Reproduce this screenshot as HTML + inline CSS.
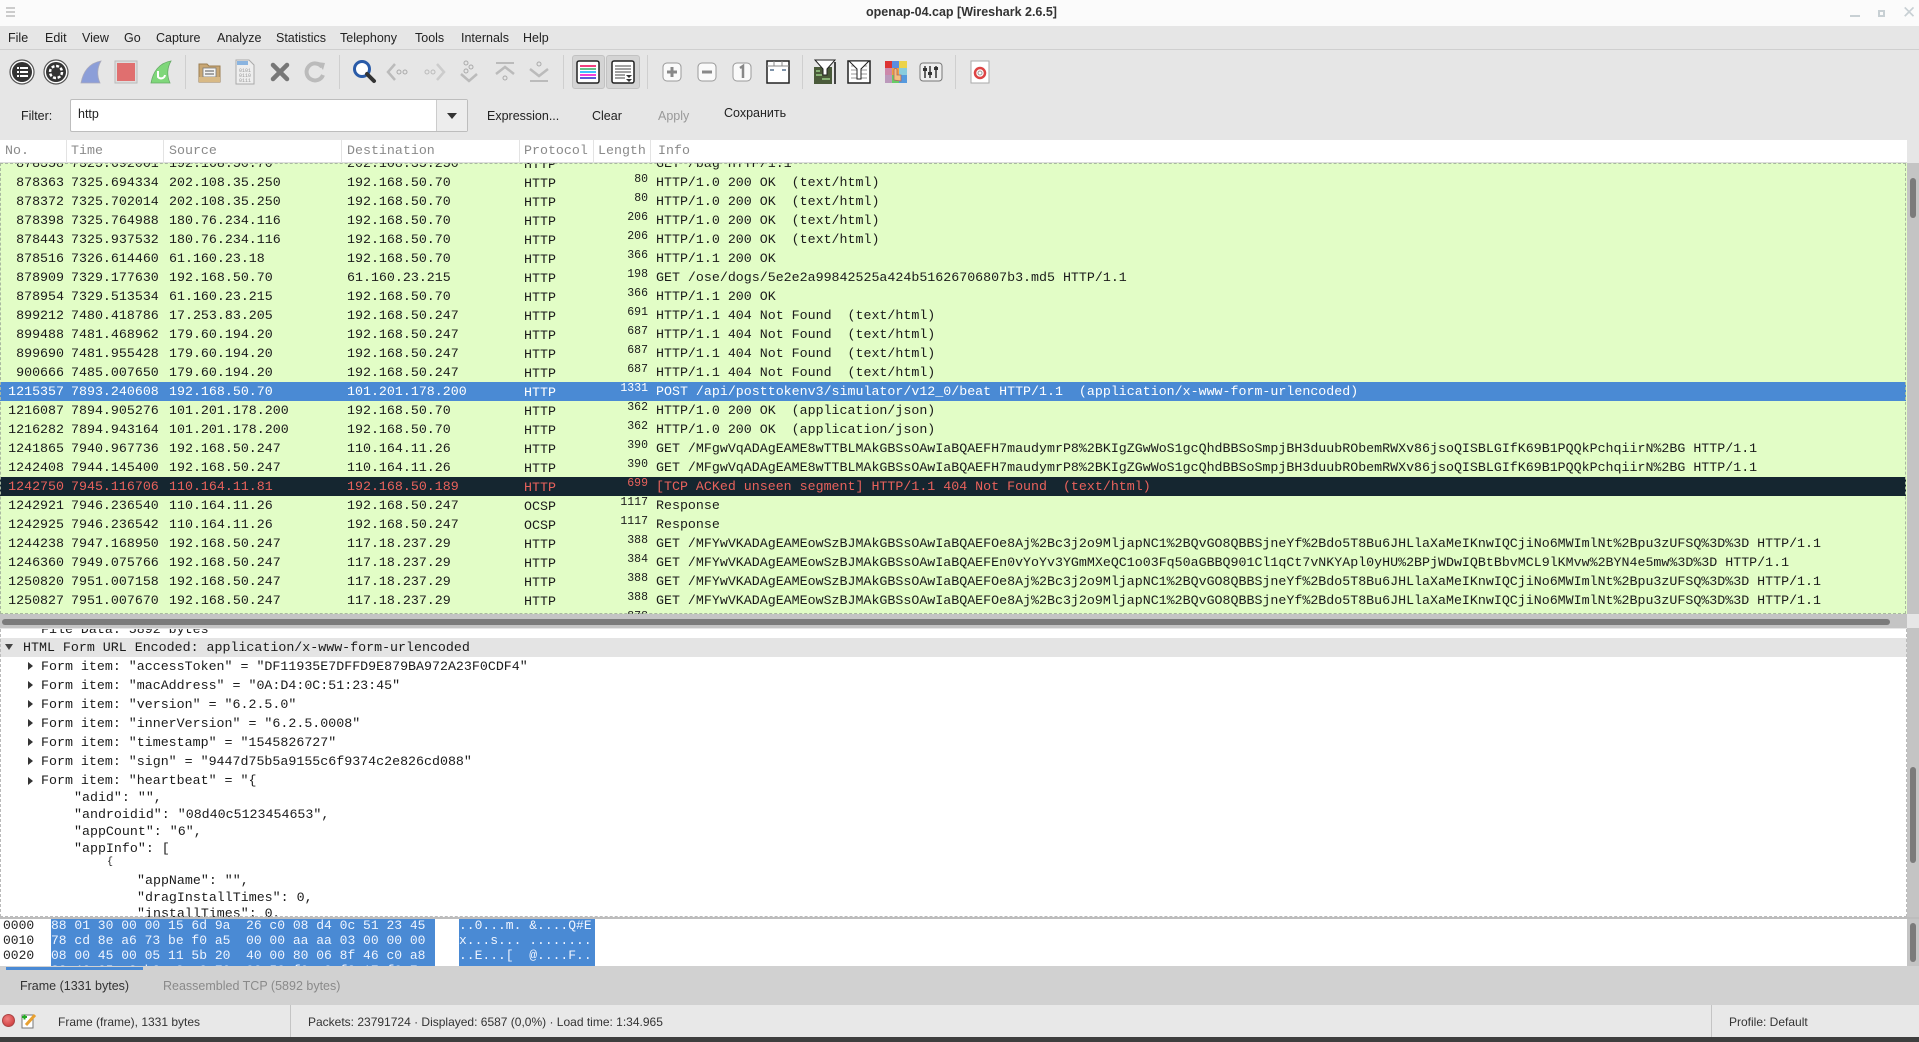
<!DOCTYPE html>
<html><head><meta charset="utf-8">
<style>
*{margin:0;padding:0;box-sizing:border-box}
body{width:1919px;height:1042px;overflow:hidden;background:#e6e6e6;font-family:"Liberation Sans",sans-serif;font-size:12px;color:#222;position:relative}
.a{position:absolute}
.title{left:0;top:0;width:1919px;height:26px;background:#fbfbfb}
.menu{left:0;top:26px;width:1919px;height:24px;background:#e6e6e6;border-bottom:1px solid #cfcfcf}
.menu span{position:absolute;top:5px;font-size:12.5px;color:#222}
.ic{position:absolute;top:58px;width:28px;height:28px}
.sep{position:absolute;top:55px;width:1px;height:34px;background:#cfcfcf}
.mono{font-family:"Liberation Mono",monospace}
#list{left:0;top:140px;width:1907px;height:474px;overflow:hidden;background:#e2fdc6;font-family:"Liberation Mono",monospace;font-size:13.3px;color:#1a1a1a}
.hdr{position:absolute;left:0;top:0;width:1907px;height:23px;background:#fff;border-bottom:1px solid #ddd;z-index:2;color:#8a8a8a;font-size:13.3px}
.hdr span{position:absolute;top:3px}
.hdr i{position:absolute;top:0;width:1px;height:23px;background:#e3e3e3}
.r{position:absolute;left:0;width:1906px;height:19px;line-height:19px;white-space:pre}
.r span{position:absolute;top:0}
.n{left:0;width:64px;text-align:right}
.t{left:71px}.s{left:169px}.d{left:347px}.p{left:524px;top:1px!important}
.l{left:593px;width:55px;text-align:right;font-size:11.5px;top:-3px!important}
.i{left:656px}
.sel{background:#4a8ad4;color:#fff}
.blk{background:#152630;color:#e8625c}
#det{left:0;top:629px;width:1907px;height:288px;background:#fff;overflow:hidden;font-family:"Liberation Mono",monospace;font-size:13.3px;color:#1a1a1a}
.dl{position:absolute;white-space:pre;line-height:19px;height:19px}
.tri{position:absolute;width:0;height:0;border-top:4px solid transparent;border-bottom:4px solid transparent;border-left:5px solid #333}
#bytes{left:0;top:919px;width:1907px;height:47px;background:#fff;overflow:hidden;font-family:"Liberation Mono",monospace;font-size:13px;color:#222}
.bl{position:absolute;white-space:pre;line-height:15px;height:15px}
.hl{background:#4a8ad4;color:#eef4ff}
.vs{position:absolute;background:#c4c4c4;width:12px}
.th{position:absolute;background:#7b7b7b;border-radius:3px;width:6px;left:3px}
</style></head><body>

<div class="a title"></div>
<div class="a" style="left:6px;top:7px;width:9px;height:2px;background:#ccc;box-shadow:0 4px 0 #ccc,0 8px 0 #ccc"></div>
<div class="a" style="left:0;width:1919px;top:5px;text-align:center;font-weight:bold;font-size:12.5px;color:#333;padding-left:4px">openap-04.cap [Wireshark 2.6.5]</div>
<div class="a" style="left:1850px;top:15px;width:10px;height:2px;background:#c8d0d4"></div>
<div class="a" style="left:1878px;top:10px;width:7px;height:7px;border:2px solid #c8d0d4"></div>
<div class="a" style="left:1876px;top:6px;width:7px;height:7px;border:2px solid #c8d0d4;border-left:none;border-bottom:none;display:none"></div>
<div class="a" style="left:1902px;top:3px;font-size:17px;color:#c8d0d4">✕</div>

<div class="a menu">
<span style="left:8px">File</span><span style="left:45px">Edit</span><span style="left:82px">View</span><span style="left:124px">Go</span><span style="left:156px">Capture</span><span style="left:217px">Analyze</span><span style="left:276px">Statistics</span><span style="left:340px">Telephony</span><span style="left:415px">Tools</span><span style="left:461px">Internals</span><span style="left:523px">Help</span>
</div>

<!-- toolbar -->
<svg class="ic" style="left:8px" viewBox="0 0 28 28"><circle cx="14" cy="14" r="12" fill="#fff" stroke="#555" stroke-width="1.2"/><circle cx="14" cy="14" r="10" fill="#333"/><g fill="#fff"><rect x="9" y="9" width="2" height="2"/><rect x="12" y="9" width="8" height="2"/><rect x="9" y="13" width="2" height="2"/><rect x="12" y="13" width="8" height="2"/><rect x="9" y="17" width="2" height="2"/><rect x="12" y="17" width="8" height="2"/></g></svg>
<svg class="ic" style="left:42px" viewBox="0 0 28 28"><circle cx="14" cy="14" r="12" fill="#fff" stroke="#555" stroke-width="1.2"/><circle cx="14" cy="14" r="10" fill="#333"/><circle cx="14" cy="14" r="6" fill="none" stroke="#fff" stroke-width="2.5" stroke-dasharray="3 1.7"/><circle cx="14" cy="14" r="2.5" fill="#333"/></svg>
<svg class="ic" style="left:77px" viewBox="0 0 28 28"><path d="M4 25 C6 14 12 5 24 3 C20 10 20 18 23 25 Z" fill="#8c9ed8" stroke="#aab" stroke-width=".8"/></svg>
<svg class="ic" style="left:112px" viewBox="0 0 28 28"><rect x="3" y="3" width="22" height="22" fill="#ddd" stroke="#bbb"/><rect x="5" y="5" width="18" height="18" fill="#e06f6f"/></svg>
<svg class="ic" style="left:147px" viewBox="0 0 28 28"><path d="M4 25 C6 14 12 5 24 3 C20 10 20 18 23 25 Z" fill="#7fd77a" stroke="#6a6" stroke-width=".8"/><path d="M11 13 v6 a4 4 0 0 0 7 -2" fill="none" stroke="#fff" stroke-width="2"/></svg>
<div class="sep" style="left:185px"></div>
<svg class="ic" style="left:196px" viewBox="0 0 28 28"><path d="M3 6 h8 l2 2 h11 v16 H3 Z" fill="#c9a774" stroke="#9c7f52"/><rect x="7" y="10" width="13" height="9" fill="#f4f4f4" stroke="#777" stroke-width=".8"/><path d="M9 13h9M9 16h9" stroke="#555"/><rect x="3" y="19" width="21" height="5" fill="#d8b985"/></svg>
<svg class="ic" style="left:231px" viewBox="0 0 28 28"><path d="M5 2 h13 l5 5 v19 H5 Z" fill="#eee" stroke="#aaa"/><path d="M6 3h11v4H6z" fill="#8ab4e0"/><text x="8" y="14" font-size="5" fill="#999" font-family="Liberation Mono">0101</text><text x="8" y="19" font-size="5" fill="#999" font-family="Liberation Mono">0110</text><text x="8" y="24" font-size="5" fill="#999" font-family="Liberation Mono">0111</text></svg>
<svg class="ic" style="left:266px" viewBox="0 0 28 28"><path d="M7 7 L21 21 M21 7 L7 21" stroke="#777" stroke-width="4.5" stroke-linecap="round"/></svg>
<svg class="ic" style="left:301px" viewBox="0 0 28 28"><path d="M21 9 A8.5 8.5 0 1 0 22 17" fill="none" stroke="#bbb" stroke-width="4"/><path d="M16 4 L24 5 L22 12 Z" fill="#bbb"/></svg>
<div class="sep" style="left:339px"></div>
<svg class="ic" style="left:350px" viewBox="0 0 28 28"><circle cx="12" cy="11" r="7.5" fill="#fff" stroke="#2a5ba8" stroke-width="3"/><path d="M17 16 L24 23" stroke="#333" stroke-width="4" stroke-linecap="round"/></svg>
<svg class="ic" style="left:384px" viewBox="0 0 28 28"><path d="M11 6 L4 14 L11 22" fill="none" stroke="#bbb" stroke-width="2.5"/><circle cx="15" cy="14" r="2" fill="none" stroke="#aaa"/><circle cx="21" cy="14" r="2" fill="none" stroke="#aaa"/></svg>
<svg class="ic" style="left:420px" viewBox="0 0 28 28"><path d="M17 6 L24 14 L17 22" fill="none" stroke="#ccc" stroke-width="2.5"/><circle cx="7" cy="14" r="2" fill="none" stroke="#bbb"/><circle cx="13" cy="14" r="2" fill="none" stroke="#bbb"/></svg>
<svg class="ic" style="left:455px" viewBox="0 0 28 28"><circle cx="11" cy="5" r="2" fill="none" stroke="#aaa"/><circle cx="16" cy="9" r="2" fill="none" stroke="#aaa"/><circle cx="11" cy="13" r="2" fill="none" stroke="#aaa"/><path d="M6 16 L14 23 L22 16" fill="none" stroke="#bbb" stroke-width="2.5"/></svg>
<svg class="ic" style="left:491px" viewBox="0 0 28 28"><path d="M5 5h18" stroke="#bbb" stroke-width="2"/><path d="M5 16 L14 9 L23 16" fill="none" stroke="#bbb" stroke-width="2.5"/><circle cx="14" cy="20" r="2" fill="none" stroke="#aaa"/></svg>
<svg class="ic" style="left:525px" viewBox="0 0 28 28"><circle cx="14" cy="6" r="2" fill="none" stroke="#aaa"/><path d="M5 11 L14 18 L23 11" fill="none" stroke="#bbb" stroke-width="2.5"/><path d="M5 23h18" stroke="#bbb" stroke-width="2"/></svg>
<div class="sep" style="left:563px"></div>
<div class="a" style="left:572px;top:55px;width:33px;height:34px;background:#d4d4d4;border:1px solid #c2c2c2;border-radius:3px"></div>
<div class="a" style="left:606px;top:55px;width:34px;height:34px;background:#d4d4d4;border:1px solid #c2c2c2;border-radius:3px"></div>
<svg class="ic" style="left:574px" viewBox="0 0 28 28"><rect x="3" y="3" width="22" height="22" rx="2" fill="#fff" stroke="#222" stroke-width="1.5"/><path d="M6 8h16" stroke="#e05" stroke-width="1.5"/><path d="M6 11h16" stroke="#3a6" stroke-width="1.5"/><path d="M6 14h16" stroke="#0af" stroke-width="1.5"/><path d="M6 17h16" stroke="#e0c" stroke-width="1.5"/><path d="M6 20h16" stroke="#22c" stroke-width="1.5"/></svg>
<svg class="ic" style="left:609px" viewBox="0 0 28 28"><rect x="3" y="3" width="22" height="22" rx="2" fill="#fff" stroke="#222" stroke-width="1.5"/><path d="M6 8h16M6 11h16M6 14h16M6 17h10M6 20h10" stroke="#444"/><path d="M17 17h6l-3 3z M17 21h6l-3 3z" fill="#333"/></svg>
<div class="sep" style="left:647px"></div>
<svg class="ic" style="left:658px" viewBox="0 0 28 28"><rect x="5" y="5" width="18" height="18" rx="4" fill="#fafafa" stroke="#999"/><path d="M14 9v10M9 14h10" stroke="#888" stroke-width="3"/></svg>
<svg class="ic" style="left:693px" viewBox="0 0 28 28"><rect x="5" y="5" width="18" height="18" rx="4" fill="#fafafa" stroke="#999"/><path d="M9 14h10" stroke="#888" stroke-width="3"/></svg>
<svg class="ic" style="left:728px" viewBox="0 0 28 28"><rect x="5" y="5" width="18" height="18" rx="4" fill="#fafafa" stroke="#999"/><path d="M12 10l3-2v12" fill="none" stroke="#888" stroke-width="2.5"/></svg>
<svg class="ic" style="left:764px" viewBox="0 0 28 28"><rect x="3" y="3" width="22" height="22" fill="#fff" stroke="#222" stroke-width="1.5"/><path d="M3 8h22M10 3v5M18 3v5" stroke="#888"/><path d="M6 12h4M18 12h4" stroke="#357" stroke-width="1.2"/></svg>
<div class="sep" style="left:802px"></div>
<svg class="ic" style="left:811px" viewBox="0 0 28 28"><rect x="3" y="9" width="18" height="17" fill="#4a5a3a"/><path d="M5 13h4M5 17h6M11 21h8" stroke="#9c8" stroke-width="1.5"/><path d="M24 4v22" stroke="#444" stroke-width="2"/><path d="M4 2h20l-8 9v6h-4v-6z" fill="#fff" stroke="#222"/></svg>
<svg class="ic" style="left:845px" viewBox="0 0 28 28"><rect x="3" y="3" width="22" height="22" fill="#fff" stroke="#222" stroke-width="1.5"/><path d="M6 8h16M6 12h16M6 16h16M6 20h16" stroke="#999"/><path d="M4 3h20l-8 8v10h-4V11z" fill="#fff" stroke="#222"/></svg>
<svg class="ic" style="left:882px" viewBox="0 0 28 28"><rect x="3" y="3" width="7" height="7" fill="#d33"/><rect x="10" y="3" width="7" height="7" fill="#5a8de0"/><rect x="17" y="3" width="8" height="7" fill="#ecd34a"/><rect x="3" y="10" width="7" height="7" fill="#c8a"/><rect x="10" y="10" width="7" height="7" fill="#f0a040"/><rect x="17" y="10" width="8" height="7" fill="#8cd"/><rect x="3" y="17" width="7" height="8" fill="#b9b"/><rect x="10" y="17" width="7" height="8" fill="#6c6"/><rect x="17" y="17" width="8" height="8" fill="#59d"/><path d="M12 22v-10a1.5 1.5 0 0 1 3 0v5h4v6z" fill="#f2c080" stroke="#a66" stroke-width=".8"/></svg>
<svg class="ic" style="left:917px" viewBox="0 0 28 28"><rect x="3" y="5" width="22" height="18" rx="3" fill="#eee" stroke="#777"/><path d="M8 8v12M13 8v12M19 8v12" stroke="#333" stroke-width="1.5"/><rect x="6" y="10" width="4" height="3" fill="#333"/><rect x="11" y="14" width="4" height="3" fill="#333"/><rect x="17" y="9" width="4" height="3" fill="#333"/></svg>
<div class="sep" style="left:955px"></div>
<svg class="ic" style="left:966px" viewBox="0 0 28 28"><path d="M5 3h18v22H5z" fill="#fff" stroke="#aaa"/><circle cx="14" cy="15" r="5" fill="none" stroke="#d44" stroke-width="2.5"/><circle cx="14" cy="15" r="2" fill="#fff" stroke="#999"/></svg>

<!-- filter bar -->
<div class="a" style="left:21px;top:109px;font-size:12.5px">Filter:</div>
<div class="a" style="left:70px;top:99px;width:398px;height:33px;background:#fff;border:1px solid #bdbdbd;border-radius:2px"></div>
<div class="a" style="left:436px;top:100px;width:31px;height:31px;background:#ededed;border-left:1px solid #ccc"></div>
<div class="a" style="left:447px;top:113px;width:0;height:0;border-left:5px solid transparent;border-right:5px solid transparent;border-top:6px solid #333"></div>
<div class="a" style="left:78px;top:107px;font-size:12.5px">http</div>
<div class="a" style="left:487px;top:109px;font-size:12.5px">Expression...</div>
<div class="a" style="left:592px;top:109px;font-size:12.5px">Clear</div>
<div class="a" style="left:658px;top:109px;font-size:12.5px;color:#999">Apply</div>
<div class="a" style="left:724px;top:106px;font-size:12.5px">Сохранить</div>

<!-- packet list -->
<div class="a" id="list">
<div class="hdr">
<span style="left:5px">No.</span><span style="left:71px">Time</span><span style="left:169px">Source</span><span style="left:347px">Destination</span><span style="left:524px">Protocol</span><span style="left:598px">Length</span><span style="left:658px">Info</span>
<i style="left:66px"></i><i style="left:163px"></i><i style="left:341px"></i><i style="left:519px"></i><i style="left:593px"></i><i style="left:650px"></i>
</div>
<div class="a" style="left:0;top:23px;width:1906px;height:451px;border:1px dashed #a9b9a0;border-right:1px dashed #a9b9a0;z-index:1"></div>
<div class="r" style="top:14px"><span class="n">878358</span><span class="t">7325.692001</span><span class="s">192.168.50.70</span><span class="d">202.108.35.250</span><span class="p">HTTP</span><span class="l">283</span><span class="i">GET /bag HTTP/1.1</span></div>
<div class="r" style="top:33px"><span class="n">878363</span><span class="t">7325.694334</span><span class="s">202.108.35.250</span><span class="d">192.168.50.70</span><span class="p">HTTP</span><span class="l">80</span><span class="i">HTTP/1.0 200 OK  (text/html)</span></div>
<div class="r" style="top:52px"><span class="n">878372</span><span class="t">7325.702014</span><span class="s">202.108.35.250</span><span class="d">192.168.50.70</span><span class="p">HTTP</span><span class="l">80</span><span class="i">HTTP/1.0 200 OK  (text/html)</span></div>
<div class="r" style="top:71px"><span class="n">878398</span><span class="t">7325.764988</span><span class="s">180.76.234.116</span><span class="d">192.168.50.70</span><span class="p">HTTP</span><span class="l">206</span><span class="i">HTTP/1.0 200 OK  (text/html)</span></div>
<div class="r" style="top:90px"><span class="n">878443</span><span class="t">7325.937532</span><span class="s">180.76.234.116</span><span class="d">192.168.50.70</span><span class="p">HTTP</span><span class="l">206</span><span class="i">HTTP/1.0 200 OK  (text/html)</span></div>
<div class="r" style="top:109px"><span class="n">878516</span><span class="t">7326.614460</span><span class="s">61.160.23.18</span><span class="d">192.168.50.70</span><span class="p">HTTP</span><span class="l">366</span><span class="i">HTTP/1.1 200 OK</span></div>
<div class="r" style="top:128px"><span class="n">878909</span><span class="t">7329.177630</span><span class="s">192.168.50.70</span><span class="d">61.160.23.215</span><span class="p">HTTP</span><span class="l">198</span><span class="i">GET /ose/dogs/5e2e2a99842525a424b51626706807b3.md5 HTTP/1.1</span></div>
<div class="r" style="top:147px"><span class="n">878954</span><span class="t">7329.513534</span><span class="s">61.160.23.215</span><span class="d">192.168.50.70</span><span class="p">HTTP</span><span class="l">366</span><span class="i">HTTP/1.1 200 OK</span></div>
<div class="r" style="top:166px"><span class="n">899212</span><span class="t">7480.418786</span><span class="s">17.253.83.205</span><span class="d">192.168.50.247</span><span class="p">HTTP</span><span class="l">691</span><span class="i">HTTP/1.1 404 Not Found  (text/html)</span></div>
<div class="r" style="top:185px"><span class="n">899488</span><span class="t">7481.468962</span><span class="s">179.60.194.20</span><span class="d">192.168.50.247</span><span class="p">HTTP</span><span class="l">687</span><span class="i">HTTP/1.1 404 Not Found  (text/html)</span></div>
<div class="r" style="top:204px"><span class="n">899690</span><span class="t">7481.955428</span><span class="s">179.60.194.20</span><span class="d">192.168.50.247</span><span class="p">HTTP</span><span class="l">687</span><span class="i">HTTP/1.1 404 Not Found  (text/html)</span></div>
<div class="r" style="top:223px"><span class="n">900666</span><span class="t">7485.007650</span><span class="s">179.60.194.20</span><span class="d">192.168.50.247</span><span class="p">HTTP</span><span class="l">687</span><span class="i">HTTP/1.1 404 Not Found  (text/html)</span></div>
<div class="r sel" style="top:242px"><span class="n">1215357</span><span class="t">7893.240608</span><span class="s">192.168.50.70</span><span class="d">101.201.178.200</span><span class="p">HTTP</span><span class="l">1331</span><span class="i">POST /api/posttokenv3/simulator/v12_0/beat HTTP/1.1  (application/x-www-form-urlencoded)</span></div>
<div class="r" style="top:261px"><span class="n">1216087</span><span class="t">7894.905276</span><span class="s">101.201.178.200</span><span class="d">192.168.50.70</span><span class="p">HTTP</span><span class="l">362</span><span class="i">HTTP/1.0 200 OK  (application/json)</span></div>
<div class="r" style="top:280px"><span class="n">1216282</span><span class="t">7894.943164</span><span class="s">101.201.178.200</span><span class="d">192.168.50.70</span><span class="p">HTTP</span><span class="l">362</span><span class="i">HTTP/1.0 200 OK  (application/json)</span></div>
<div class="r" style="top:299px"><span class="n">1241865</span><span class="t">7940.967736</span><span class="s">192.168.50.247</span><span class="d">110.164.11.26</span><span class="p">HTTP</span><span class="l">390</span><span class="i">GET /MFgwVqADAgEAME8wTTBLMAkGBSsOAwIaBQAEFH7maudymrP8%2BKIgZGwWoS1gcQhdBBSoSmpjBH3duubRObemRWXv86jsoQISBLGIfK69B1PQQkPchqiirN%2BG HTTP/1.1</span></div>
<div class="r" style="top:318px"><span class="n">1242408</span><span class="t">7944.145400</span><span class="s">192.168.50.247</span><span class="d">110.164.11.26</span><span class="p">HTTP</span><span class="l">390</span><span class="i">GET /MFgwVqADAgEAME8wTTBLMAkGBSsOAwIaBQAEFH7maudymrP8%2BKIgZGwWoS1gcQhdBBSoSmpjBH3duubRObemRWXv86jsoQISBLGIfK69B1PQQkPchqiirN%2BG HTTP/1.1</span></div>
<div class="r blk" style="top:337px"><span class="n">1242750</span><span class="t">7945.116706</span><span class="s">110.164.11.81</span><span class="d">192.168.50.189</span><span class="p">HTTP</span><span class="l">699</span><span class="i">[TCP ACKed unseen segment] HTTP/1.1 404 Not Found  (text/html)</span></div>
<div class="r" style="top:356px"><span class="n">1242921</span><span class="t">7946.236540</span><span class="s">110.164.11.26</span><span class="d">192.168.50.247</span><span class="p">OCSP</span><span class="l">1117</span><span class="i">Response</span></div>
<div class="r" style="top:375px"><span class="n">1242925</span><span class="t">7946.236542</span><span class="s">110.164.11.26</span><span class="d">192.168.50.247</span><span class="p">OCSP</span><span class="l">1117</span><span class="i">Response</span></div>
<div class="r" style="top:394px"><span class="n">1244238</span><span class="t">7947.168950</span><span class="s">192.168.50.247</span><span class="d">117.18.237.29</span><span class="p">HTTP</span><span class="l">388</span><span class="i">GET /MFYwVKADAgEAMEowSzBJMAkGBSsOAwIaBQAEFOe8Aj%2Bc3j2o9MljapNC1%2BQvGO8QBBSjneYf%2Bdo5T8Bu6JHLlaXaMeIKnwIQCjiNo6MWImlNt%2Bpu3zUFSQ%3D%3D HTTP/1.1</span></div>
<div class="r" style="top:413px"><span class="n">1246360</span><span class="t">7949.075766</span><span class="s">192.168.50.247</span><span class="d">117.18.237.29</span><span class="p">HTTP</span><span class="l">384</span><span class="i">GET /MFYwVKADAgEAMEowSzBJMAkGBSsOAwIaBQAEFEn0vYoYv3YGmMXeQC1o03Fq50aGBBQ901Cl1qCt7vNKYApl0yHU%2BPjWDwIQBtBbvMCL9lKMvw%2BYN4e5mw%3D%3D HTTP/1.1</span></div>
<div class="r" style="top:432px"><span class="n">1250820</span><span class="t">7951.007158</span><span class="s">192.168.50.247</span><span class="d">117.18.237.29</span><span class="p">HTTP</span><span class="l">388</span><span class="i">GET /MFYwVKADAgEAMEowSzBJMAkGBSsOAwIaBQAEFOe8Aj%2Bc3j2o9MljapNC1%2BQvGO8QBBSjneYf%2Bdo5T8Bu6JHLlaXaMeIKnwIQCjiNo6MWImlNt%2Bpu3zUFSQ%3D%3D HTTP/1.1</span></div>
<div class="r" style="top:451px"><span class="n">1250827</span><span class="t">7951.007670</span><span class="s">192.168.50.247</span><span class="d">117.18.237.29</span><span class="p">HTTP</span><span class="l">388</span><span class="i">GET /MFYwVKADAgEAMEowSzBJMAkGBSsOAwIaBQAEFOe8Aj%2Bc3j2o9MljapNC1%2BQvGO8QBBSjneYf%2Bdo5T8Bu6JHLlaXaMeIKnwIQCjiNo6MWImlNt%2Bpu3zUFSQ%3D%3D HTTP/1.1</span></div>
<div class="r" style="top:470px"><span class="n">1255500</span><span class="t">7953.966748</span><span class="s">117.18.237.29</span><span class="d">192.168.50.247</span><span class="p">OCSP</span><span class="l">878</span><span class="i">Response</span></div>
</div>
<div class="vs" style="left:1907px;top:163px;height:451px"></div>
<div class="th" style="left:1910px;top:178px;height:40px"></div>
<div class="a" style="left:1907px;top:140px;width:12px;height:23px;background:#e6e6e6"></div>
<!-- hscroll -->
<div class="a" style="left:0;top:614px;width:1907px;height:14px;background:#c4c4c4"></div>
<div class="a" style="left:2px;top:619px;width:1888px;height:6px;background:#7b7b7b;border-radius:3px"></div>
<div class="a" style="left:1907px;top:614px;width:12px;height:14px;background:#e6e6e6"></div>

<!-- details -->
<div class="a" id="det">
<div class="dl" style="left:41px;top:-9px">File Data: 5892 bytes</div>
<div class="a" style="left:0;top:9px;width:1907px;height:19px;background:#e4e4e4"></div>
<div class="a" style="left:5px;top:15px;width:0;height:0;border-left:4px solid transparent;border-right:4px solid transparent;border-top:6px solid #444"></div>
<div class="dl" style="left:23px;top:9px">HTML Form URL Encoded: application/x-www-form-urlencoded</div>
<div class="tri" style="left:28px;top:33px"></div><div class="dl" style="left:41px;top:28px">Form item: "accessToken" = "DF11935E7DFFD9E879BA972A23F0CDF4"</div>
<div class="tri" style="left:28px;top:52px"></div><div class="dl" style="left:41px;top:47px">Form item: "macAddress" = "0A:D4:0C:51:23:45"</div>
<div class="tri" style="left:28px;top:71px"></div><div class="dl" style="left:41px;top:66px">Form item: "version" = "6.2.5.0"</div>
<div class="tri" style="left:28px;top:90px"></div><div class="dl" style="left:41px;top:85px">Form item: "innerVersion" = "6.2.5.0008"</div>
<div class="tri" style="left:28px;top:109px"></div><div class="dl" style="left:41px;top:104px">Form item: "timestamp" = "1545826727"</div>
<div class="tri" style="left:28px;top:128px"></div><div class="dl" style="left:41px;top:123px">Form item: "sign" = "9447d75b5a9155c6f9374c2e826cd088"</div>
<div class="tri" style="left:28px;top:148px"></div><div class="dl" style="left:41px;top:142px">Form item: "heartbeat" = "{</div>
<div class="dl" style="left:74px;top:159px">"adid": "",</div>
<div class="dl" style="left:74px;top:176px">"androidid": "08d40c5123454653",</div>
<div class="dl" style="left:74px;top:193px">"appCount": "6",</div>
<div class="dl" style="left:74px;top:210px">"appInfo": [</div>
<div class="dl" style="left:107px;top:224px;font-size:10px">{</div>
<div class="dl" style="left:137px;top:242px">"appName": "",</div>
<div class="dl" style="left:137px;top:259px">"dragInstallTimes": 0,</div>
<div class="dl" style="left:137px;top:275px">"installTimes": 0,</div>
<div class="a" style="left:0;top:0;width:1907px;height:288px;border:1px dashed #bbb;border-top:none"></div>
</div>
<div class="vs" style="left:1907px;top:628px;height:289px"></div>
<div class="th" style="left:1910px;top:767px;height:96px"></div>
<div class="a" style="left:0;top:917px;width:1919px;height:2px;background:#bdbdbd"></div>

<!-- bytes -->
<div class="a" id="bytes">
<div class="hl a" style="left:51px;top:0;width:384px;height:47px"></div>
<div class="hl a" style="left:459px;top:0;width:136px;height:47px"></div>
<div class="bl" style="left:3px;top:-1px">0000</div><div class="bl" style="left:51px;top:-1px;color:#eef4ff">88 01 30 00 00 15 6d 9a  26 c0 08 d4 0c 51 23 45</div><div class="bl" style="left:459px;top:-1px;color:#eef4ff">..0...m. &amp;....Q#E</div>
<div class="bl" style="left:3px;top:14px">0010</div><div class="bl" style="left:51px;top:14px;color:#eef4ff">78 cd 8e a6 73 be f0 a5  00 00 aa aa 03 00 00 00</div><div class="bl" style="left:459px;top:14px;color:#eef4ff">x...s... ........</div>
<div class="bl" style="left:3px;top:29px">0020</div><div class="bl" style="left:51px;top:29px;color:#eef4ff">08 00 45 00 05 11 5b 20  40 00 80 06 8f 46 c0 a8</div><div class="bl" style="left:459px;top:29px;color:#eef4ff">..E...[  @....F..</div>
<div class="bl" style="left:51px;top:44px;color:#eef4ff">32 46 65 c9 b2 c8 c0 70  00 50 f0 e0 f2 17 f0 7c</div>
</div>
<div class="vs" style="left:1907px;top:919px;height:47px"></div>
<div class="th" style="left:1910px;top:923px;height:39px"></div>

<!-- tabs -->
<div class="a" style="left:0;top:966px;width:1919px;height:39px;background:#d1d1d1"></div>
<div class="a" style="left:6px;top:967px;width:137px;height:3px;background:#4a8ad4"></div>
<div class="a" style="left:20px;top:979px;font-size:12.5px;color:#333">Frame (1331 bytes)</div>
<div class="a" style="left:163px;top:979px;font-size:12.5px;color:#8a8a8a">Reassembled TCP (5892 bytes)</div>

<!-- status -->
<div class="a" style="left:0;top:1005px;width:1919px;height:32px;background:#e8e8e8"></div>
<div class="a" style="left:0;top:1037px;width:1919px;height:5px;background:#3e3e3e"></div>
<div class="a" style="left:2px;top:1014px;width:13px;height:13px;border-radius:50%;background:radial-gradient(circle at 40% 35%,#f08080,#c83030);border:1px solid #a44"></div>
<svg class="a" style="left:21px;top:1012px" width="16" height="18" viewBox="0 0 16 18"><rect x="1" y="3" width="11" height="13" fill="#fff" stroke="#777"/><path d="M5 13 L14 3" stroke="#e8a030" stroke-width="3"/><path d="M1 5h5M3.5 2.5v5" stroke="#2a2" stroke-width="2"/></svg>
<div class="a" style="left:58px;top:1015px;font-size:12px;color:#333">Frame (frame), 1331 bytes</div>
<div class="a" style="left:290px;top:1005px;width:1px;height:32px;background:#c4c4c4"></div>
<div class="a" style="left:308px;top:1015px;font-size:12px;color:#333">Packets: 23791724 · Displayed: 6587 (0,0%) · Load time: 1:34.965</div>
<div class="a" style="left:1711px;top:1005px;width:1px;height:32px;background:#c4c4c4"></div>
<div class="a" style="left:1729px;top:1015px;font-size:12px;color:#333">Profile: Default</div>
</body></html>
